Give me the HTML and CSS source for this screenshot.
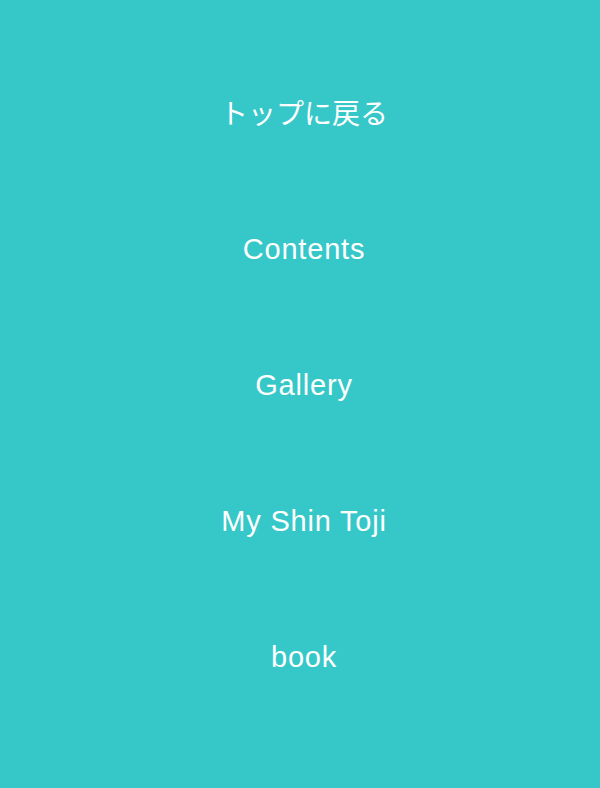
FILE: index.html
```html
<!DOCTYPE html>
<html lang="ja">
<head>
<meta charset="utf-8">
<link rel="stylesheet" href="styles.css">
</head>
<body>
<nav class="menu">
  <a class="item item-ja" href="#">トップに戻る</a>
  <a class="item" href="#">Contents</a>
  <a class="item" href="#">Gallery</a>
  <a class="item" href="#">My Shin Toji</a>
  <a class="item" href="#">book</a>
</nav>
</body>
</html>
```
FILE: styles.css
```css
html, body {
  margin: 0;
  height: 100%;
}
body {
  background: #36c8c8;
  font-family: "Liberation Sans", "Noto Sans CJK JP", sans-serif;
}
.menu {
  display: flex;
  flex-direction: column;
  align-items: center;
  padding-top: 44px;
  padding-left: 8px;
}
.item {
  display: block;
  height: 134px;
  padding-top: 2px;
  line-height: 134px;
  color: #fff;
  text-decoration: none;
  font-size: 29px;
  letter-spacing: 0.8px;
  text-align: center;
}
.item-ja {
  height: 136px;
  padding-top: 0;
  line-height: 136px;
  font-family: "Noto Sans CJK JP", sans-serif;
  font-size: 28px;
  letter-spacing: 0;
}
```
